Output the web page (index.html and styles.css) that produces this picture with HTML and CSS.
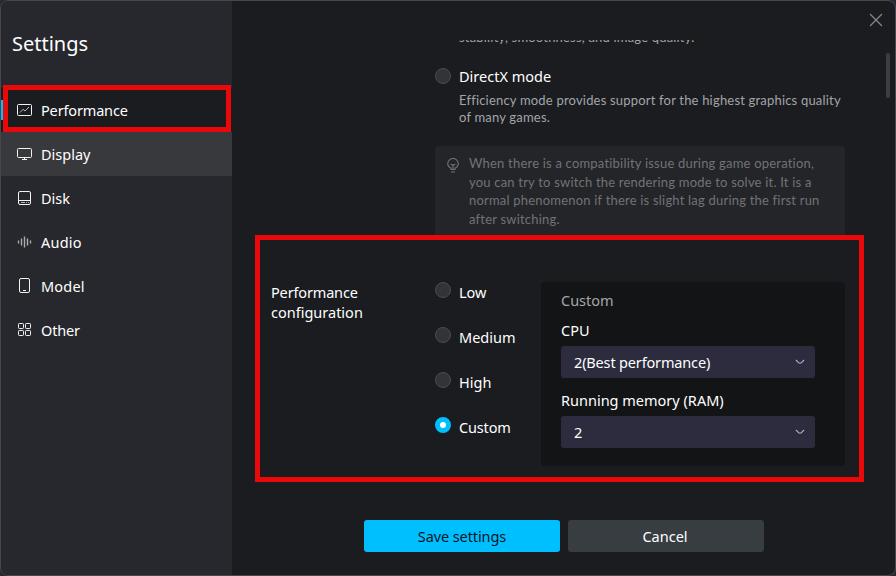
FILE: index.html
```
<!DOCTYPE html>
<html lang="en">
<head>
<meta charset="utf-8">
<title>Settings</title>
<link rel="stylesheet" href="styles.css">
</head>
<body>
<div class="window">
  <aside class="sidebar">
    <h1 class="title">Settings</h1>
    <nav class="nav">
      <a class="nav-item active">
        <svg class="icon" viewBox="0 0 16 16"><rect x="1.500" y="2.500" width="14" height="11" rx="1"/><path class="thin" d="M4 10.500 7 7.300l2 1.700 4-4"/></svg>
        <span class="tight">Performance</span>
      </a>
      <a class="nav-item hover">
        <svg class="icon" viewBox="0 0 16 16"><rect x="1.500" y="2.500" width="14" height="9" rx="1"/><path d="M8.500 11.500v2M6 13.500h5"/></svg>
        <span>Display</span>
      </a>
      <a class="nav-item">
        <svg class="icon" viewBox="0 0 16 16"><rect x="2.500" y="1.500" width="12" height="13" rx="1.500"/><path d="M3 10.500h11"/><path class="thin" d="M5 12.500h4M10 12.500h1M12 12.500h1"/></svg>
        <span>Disk</span>
      </a>
      <a class="nav-item">
        <svg class="icon bars" viewBox="0 0 16 16"><path d="M2.500 6.500v3M5.500 4.500v7M8.500 2.500v11M11.500 4.500v7M14.500 6.500v3"/></svg>
        <span class="loose">Audio</span>
      </a>
      <a class="nav-item">
        <svg class="icon" viewBox="0 0 16 16"><rect x="3.500" y="0.500" width="10" height="14" rx="1.500"/><path d="M7 12.500h3"/></svg>
        <span class="loose">Model</span>
      </a>
      <a class="nav-item">
        <svg class="icon" viewBox="0 0 16 16"><rect x="2.500" y="1.500" width="5" height="5" rx=".8"/><rect x="9.500" y="1.500" width="5" height="5" rx=".8"/><rect x="2.500" y="8.500" width="5" height="5" rx=".8"/><rect x="9.500" y="8.500" width="5" height="5" rx=".8"/></svg>
        <span class="tight">Other</span>
      </a>
    </nav>
    <div class="mark mark-nav"></div>
  </aside>

  <main class="main">
    <header class="topbar">
      <svg class="close" viewBox="0 0 14 14"><path d="M1 1l12 12M13 1 1 13"/></svg>
    </header>
    <section class="scroll">
      <div class="modes">
        <p class="desc clipped">stability, smoothness, and image quality.</p>
        <div class="mode">
          <i class="radio"></i>
          <div class="mode-text">
            <div class="mode-name">DirectX mode</div>
            <p class="desc">Efficiency mode provides support for the highest graphics quality<br>of many games.</p>
          </div>
        </div>
        <div class="tip">
          <svg class="bulb" viewBox="0 0 12 15"><path d="M4 11.500V10.200C2 9.300.7 7.800.7 5.800a5.300 5.300 0 0 1 10.600 0c0 2-1.300 3.500-3.300 4.400v1.300zM3.800 6l2.200 1.500L8.200 6M6 7.500v4M4 14h4"/></svg>
          <p>When there is a compatibility issue during game operation,<br>you can try to switch the rendering mode to solve it. It is a<br>normal phenomenon if there is slight lag during the first run<br>after switching.</p>
        </div>
      </div>
      <div class="config">
        <div class="config-label"><span class="tight">Performance</span><br>configuration</div>
        <div class="options">
          <label class="option"><i class="radio"></i><span>Low</span></label>
          <label class="option"><i class="radio"></i><span>Medium</span></label>
          <label class="option"><i class="radio"></i><span>High</span></label>
          <label class="option"><i class="radio on"></i><span class="tight">Custom</span></label>
        </div>
        <div class="panel">
          <div class="panel-title">Custom</div>
          <div class="field-label">CPU</div>
          <div class="select"><span class="tight">2(Best performance)</span><svg class="chevron" viewBox="0 0 10 6"><path d="M1 1c1.500 1.500 2.500 3.200 4 3.200S7.500 2.500 9 1"/></svg></div>
          <div class="field-label second">Running memory (RAM)</div>
          <div class="select"><span>2</span><svg class="chevron" viewBox="0 0 10 6"><path d="M1 1c1.500 1.500 2.500 3.200 4 3.200S7.500 2.500 9 1"/></svg></div>
        </div>
      </div>
      <div class="scrollbar"></div>
    </section>
    <footer class="actions">
      <button class="btn primary">Save settings</button>
      <button class="btn">Cancel</button>
    </footer>
  </main>
  <div class="mark mark-config"></div>
</div>
</body>
</html>
```
FILE: styles.css
```
* { box-sizing: border-box; }
body {
  margin: 0;
  background: #1d2a38;
  font-family: "Noto Sans", sans-serif;
  font-size: 14.5px;
  line-height: 20px;
  color: #fff;
}
p, h1 { margin: 0; font-weight: 400; }
svg { fill: none; flex: none; }
.tight { letter-spacing: -0.16px; }
.loose { letter-spacing: 0.2px; }
.window {
  position: relative;
  display: flex;
  width: 896px;
  height: 576px;
  border: 1px solid #47484c;
  border-radius: 8px;
  background: #1b1c1f;
  overflow: hidden;
}
.sidebar { position: relative; width: 231px; background: #27282d; }
.title { height: 87px; padding: 29px 0 0 11px; font-size: 20px; line-height: 28px; }
.nav-item {
  display: flex;
  align-items: center;
  gap: 9px;
  height: 44px;
  padding-left: 15px;
}
.nav-item span { margin-top: -1px; }
.nav-item.active { background: #1b1c1f; position: relative; }
.nav-item.active::before {
  content: "";
  position: absolute;
  left: 0;
  top: 12px;
  width: 3px;
  height: 20px;
  background: #00bfff;
}
.nav-item.hover { background: #38393c; }
.icon { width: 16px; height: 16px; stroke: #f2f2f3; stroke-width: 1; }
.icon .thin { stroke: #b5b5b8; }
.bars { stroke: #aaabad; stroke-width: 1.4; }

.main { flex: 1; display: flex; flex-direction: column; }
.topbar { display: flex; justify-content: flex-end; height: 39px; padding: 12px 12px 0 0; }
.close { width: 14px; height: 14px; stroke: #85868a; stroke-width: 1.3; }
.scroll { position: relative; height: 446px; overflow: hidden; }
.modes { width: 410px; height: 200px; margin-left: 203px; overflow: hidden; }
.desc {
  font-family: Lato, sans-serif;
  font-size: 13px;
  line-height: 17px;
  letter-spacing: 0.19px;
  color: #a1a5ab;
  white-space: nowrap;
}
.clipped { height: 28px; margin: -11px 0 11px 24px; }
.mode { display: flex; gap: 8px; height: 78px; }
.mode-name { height: 26px; margin-top: -2px; line-height: 20px; }
.radio {
  flex: none;
  width: 16px;
  height: 16px;
  border: 1px solid #4b4c50;
  border-radius: 50%;
  background: #333437;
}
.radio.on { border: 5px solid #00bfff; background: #fff; }
.tip {
  display: flex;
  gap: 10px;
  height: 110px;
  padding: 8px 0 0 12px;
  border-radius: 4px;
  background: #242528;
  font-family: Lato, sans-serif;
  font-size: 13px;
  line-height: 18.600px;
  letter-spacing: 0.2px;
  color: #707378;
  white-space: nowrap;
}
.bulb { width: 12px; height: 15px; margin-top: 4px; stroke: #707378; stroke-width: 1.1; }
.config { display: flex; padding: 42px 0 0 39px; }
.config-label { width: 164px; }
.options { width: 106px; }
.option { display: flex; gap: 8px; height: 45px; }
.panel { width: 304px; height: 184px; padding: 8px 30px 0 20px; border-radius: 4px; background: #131416; }
.panel-title { height: 30px; color: #a4a6aa; }
.field-label { height: 26px; line-height: 20px; }
.field-label.second { margin-top: 12px; }
.select {
  display: flex;
  align-items: center;
  justify-content: space-between;
  height: 32px;
  padding: 0 10px 0 13px;
  border-radius: 3px;
  background: #2c2c3e;
}
.chevron { width: 10px; height: 6px; stroke: #b4b5c0; stroke-width: 1.1; }
.scrollbar { position: absolute; right: 5px; top: 13px; width: 4px; height: 45px; border-radius: 2px; background: #3d3e42; }
.actions { display: flex; gap: 8px; padding: 34px 0 0 132px; }
.btn {
  width: 196px;
  height: 32px;
  padding: 0 2px 0 0;
  border: 0;
  border-radius: 3px;
  background: #383d41;
  font: inherit;
  color: #fff;
}
.btn.primary { padding: 0; letter-spacing: -0.1px; background: #00bfff; color: #06141f; }
.mark { position: absolute; border: 5px solid #ea0808; pointer-events: none; }
.mark-nav { left: 2px; top: 84px; width: 228px; height: 47px; }
.mark-config { left: 254px; top: 234px; width: 609px; height: 247px; }
```
